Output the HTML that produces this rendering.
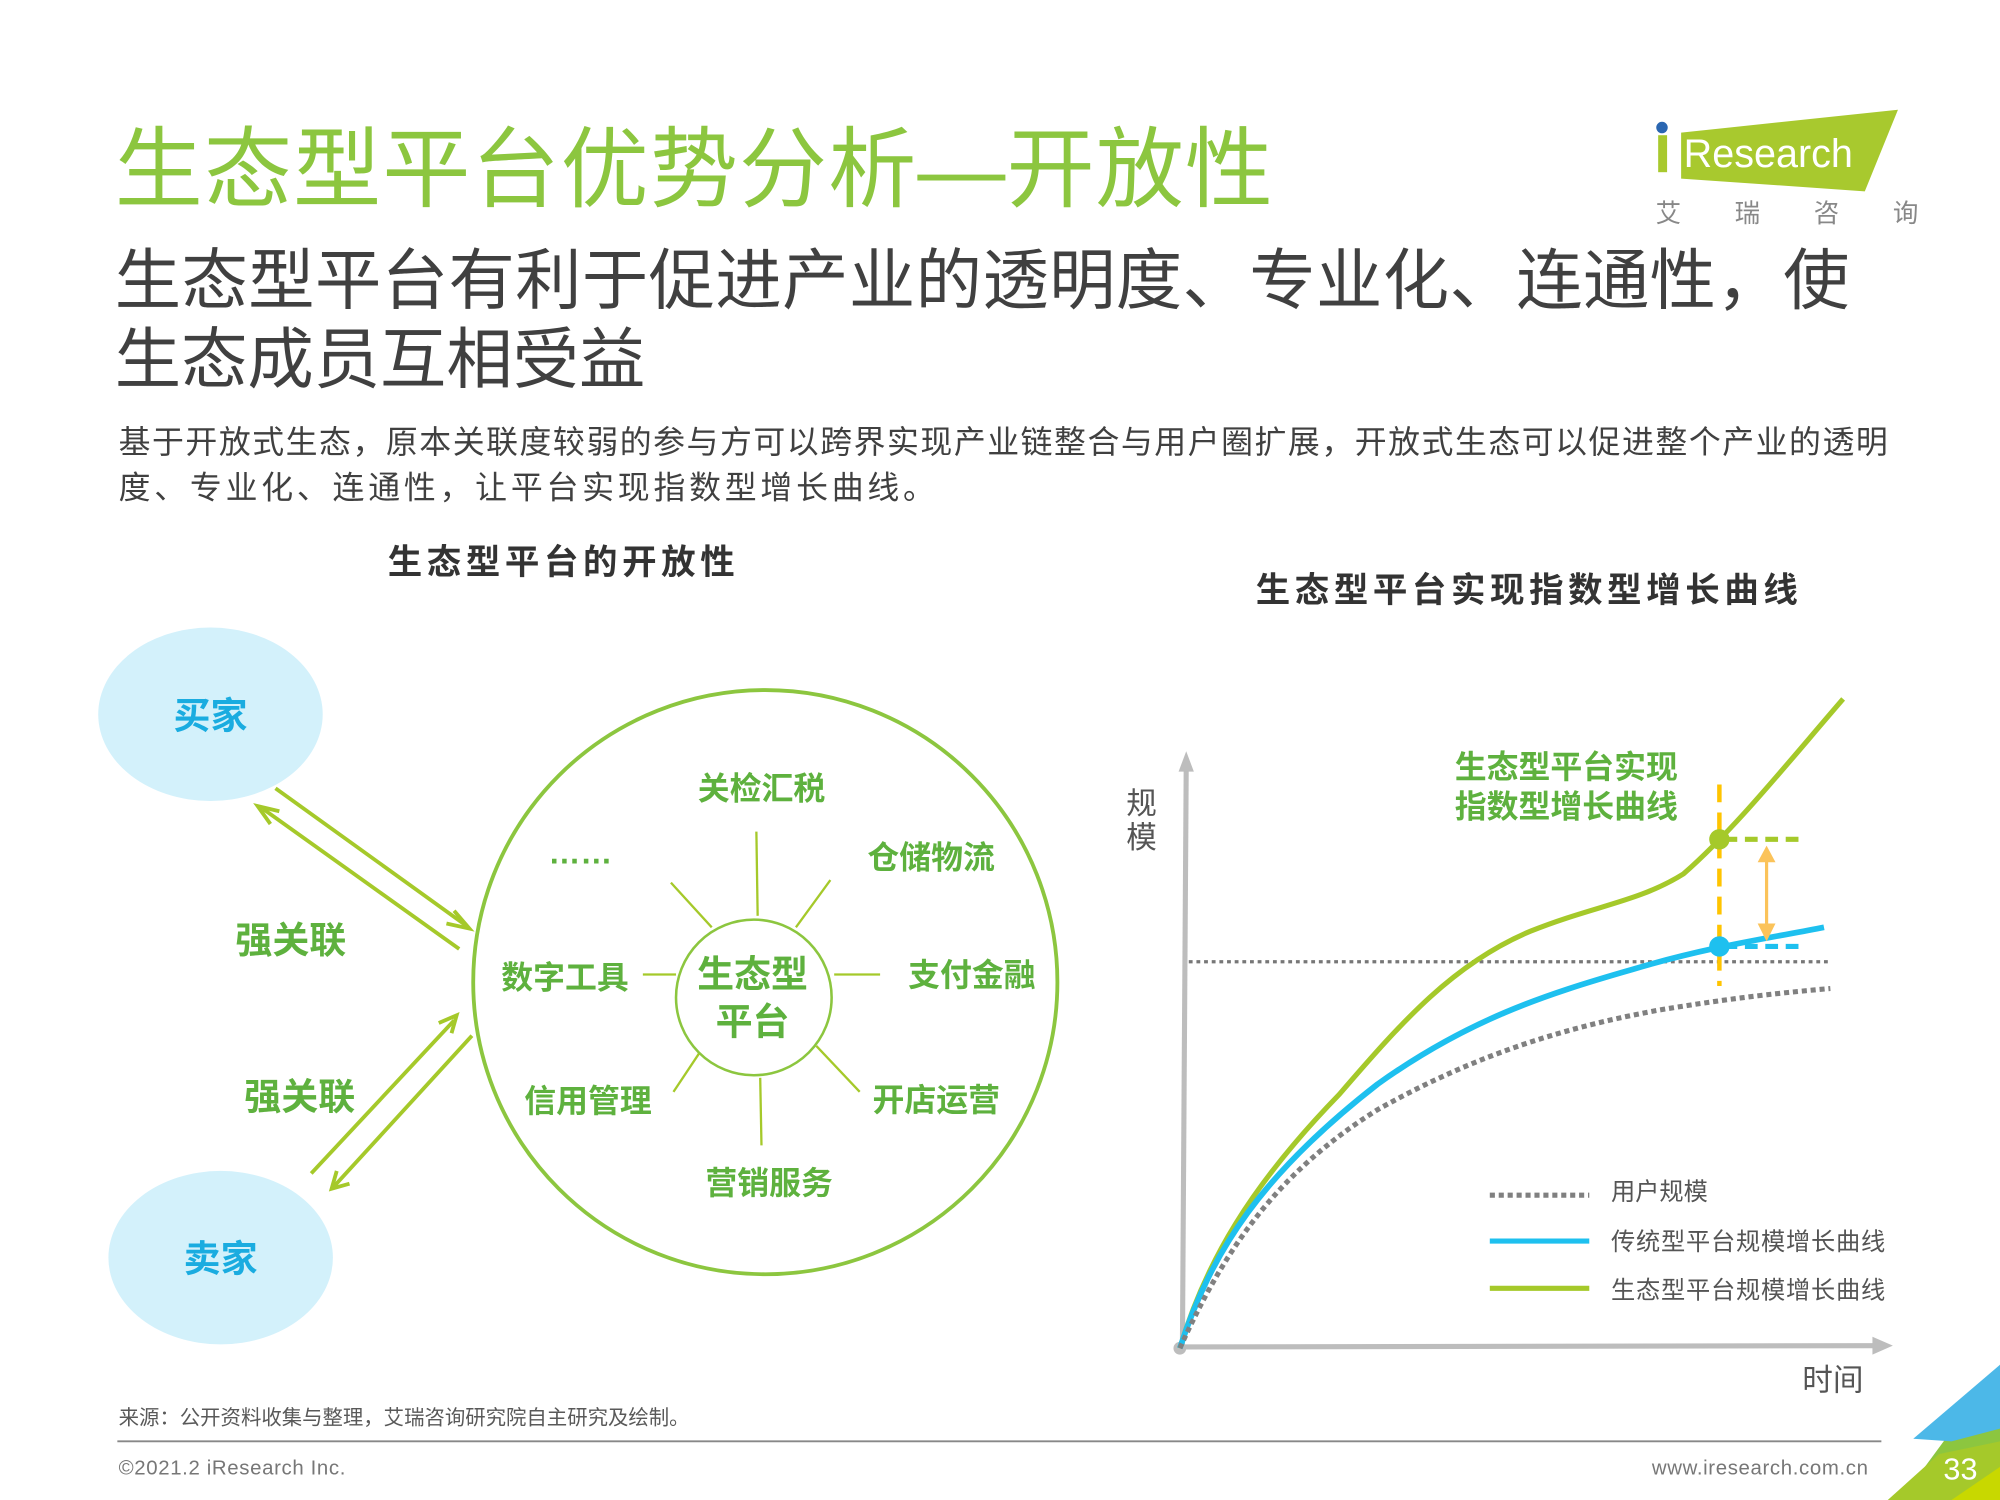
<!DOCTYPE html>
<html><head><meta charset="utf-8"><style>
html,body{margin:0;padding:0;background:#fff;}
svg{display:block;}
text{font-family:"Liberation Sans","Noto Sans CJK SC",sans-serif;}
</style></head><body>
<svg width="2000" height="1500" viewBox="0 0 1568 1176" xmlns="http://www.w3.org/2000/svg">
<rect width="1568" height="1176" fill="#fff"/>
<!-- logo -->
<polygon points="1318,104 1488,86 1462,150 1318,140" fill="#a8c92e"/>
<rect x="1300" y="106" width="7" height="29" fill="#a8c92e"/>
<circle cx="1303" cy="100" r="4.5" fill="#2a66b1"/>
<text x="1320" y="131" font-size="31" fill="#fff">Research</text>
<text x="1298" y="174" font-size="20" fill="#888" letter-spacing="42">艾瑞咨询</text>
<!-- titles -->
<text x="90" y="157" font-size="69" fill="#8cc63f" textLength="908">生态型平台优势分析—开放性</text>
<text x="90" y="238" font-size="52" fill="#404040" textLength="1360">生态型平台有利于促进产业的透明度、专业化、连通性，使</text>
<text x="90" y="300" font-size="52" fill="#404040">生态成员互相受益</text>
<text x="93" y="355" font-size="25" fill="#404040" textLength="1387">基于开放式生态，原本关联度较弱的参与方可以跨界实现产业链整合与用户圈扩展，开放式生态可以促进整个产业的透明</text>
<text x="93" y="391" font-size="25" fill="#404040" textLength="640">度、专业化、连通性，让平台实现指数型增长曲线。</text>
<text x="440" y="450" font-size="27" font-weight="bold" fill="#333" text-anchor="middle" textLength="272">生态型平台的开放性</text>
<text x="1197" y="472" font-size="27" font-weight="bold" fill="#333" text-anchor="middle" textLength="425">生态型平台实现指数型增长曲线</text>
<!-- left diagram -->
<ellipse cx="165" cy="560" rx="88" ry="68" fill="#d3f1fb"/>
<ellipse cx="173" cy="986" rx="88" ry="68" fill="#d3f1fb"/>
<text x="165" y="571" font-size="29" font-weight="bold" fill="#1aace0" text-anchor="middle">买家</text>
<text x="173" y="997" font-size="29" font-weight="bold" fill="#1aace0" text-anchor="middle">卖家</text>
<g stroke="#a5c92a" stroke-width="3" fill="none">
<line x1="216" y1="618" x2="366" y2="726"/><polyline points="356,714 368,728 350,724"/>
<line x1="360" y1="744" x2="206" y2="634"/><polyline points="212,646 202,632 219,636"/>
<line x1="244" y1="920" x2="356" y2="800"/><polyline points="344,802 358,796 354,810"/>
<line x1="370" y1="812" x2="262" y2="930"/><polyline points="274,928 260,932 264,918"/>
</g>
<text x="228" y="747" font-size="29" font-weight="bold" fill="#5eb13e" text-anchor="middle">强关联</text>
<text x="235" y="870" font-size="29" font-weight="bold" fill="#5eb13e" text-anchor="middle">强关联</text>
<circle cx="600" cy="770" r="229" fill="none" stroke="#8cc63f" stroke-width="3"/>
<circle cx="591" cy="782" r="61" fill="none" stroke="#8cc63f" stroke-width="2"/>
<g stroke="#a5c92a" stroke-width="1.8">
<line x1="593" y1="652" x2="594" y2="718"/>
<line x1="651" y1="690" x2="624" y2="727"/>
<line x1="654" y1="764" x2="690" y2="764"/>
<line x1="640" y1="820" x2="674" y2="856"/>
<line x1="596" y1="845" x2="597" y2="898"/>
<line x1="548" y1="826" x2="528" y2="856"/>
<line x1="504" y1="764" x2="530" y2="764"/>
<line x1="526" y1="692" x2="558" y2="727"/>
</g>
<g font-size="25" font-weight="bold" fill="#5eb13e" text-anchor="middle">
<text x="597" y="627">关检汇税</text>
<text x="730" y="681">仓储物流</text>
<text x="762" y="773">支付金融</text>
<text x="734" y="871">开店运营</text>
<text x="603" y="936">营销服务</text>
<text x="461" y="872">信用管理</text>
<text x="443" y="775">数字工具</text>
<text x="455" y="677">……</text>
<text x="590" y="774" font-size="29">生态型</text>
<text x="590" y="811" font-size="29">平台</text>
</g>
<!-- right chart -->
<g stroke="#bdbdbd" stroke-width="4" fill="none">
<line x1="927" y1="1058" x2="930" y2="600"/>
<line x1="925" y1="1056" x2="1470" y2="1055"/>
</g>
<polygon points="924,605 930,589 936,605" fill="#bdbdbd"/>
<polygon points="1468,1048 1484,1055 1468,1062" fill="#bdbdbd"/>
<circle cx="925" cy="1057" r="5" fill="#bdbdbd"/>
<line x1="932" y1="754" x2="1436" y2="754" stroke="#777" stroke-width="2.5" stroke-dasharray="3,3"/>
<path d="M925,1057 C945,990 980,930 1050,858 C1100,800 1140,755 1200,730 C1250,710 1285,707 1320,685 C1360,650 1400,600 1445,548" fill="none" stroke="#a5c92a" stroke-width="4"/>
<path d="M925,1057 C950,980 990,920 1080,850 C1150,800 1210,780 1280,760 C1340,742 1390,735 1430,727" fill="none" stroke="#1ec0ef" stroke-width="4.5"/>
<path d="M925,1057 C960,980 1000,920 1080,870 C1160,825 1230,805 1300,792 C1360,782 1400,778 1435,775" fill="none" stroke="#808080" stroke-width="4" stroke-dasharray="4,3"/>
<line x1="1348" y1="615" x2="1348" y2="773" stroke="#ffc400" stroke-width="3.5" stroke-dasharray="14,8"/>
<line x1="1352" y1="658" x2="1412" y2="658" stroke="#a5c92a" stroke-width="4" stroke-dasharray="10,6"/>
<line x1="1352" y1="742" x2="1412" y2="742" stroke="#1ec0ef" stroke-width="4" stroke-dasharray="10,6"/>
<line x1="1385" y1="672" x2="1385" y2="728" stroke="#fbc35a" stroke-width="2.5"/>
<polygon points="1378,676 1385,663 1392,676" fill="#fbc35a"/>
<polygon points="1378,724 1385,738 1392,724" fill="#fbc35a"/>
<circle cx="1348" cy="658" r="8" fill="#a5c92a"/>
<circle cx="1348" cy="742" r="8" fill="#1ec0ef"/>
<text x="1228" y="610" font-size="25" font-weight="bold" fill="#5eb13e" text-anchor="middle">生态型平台实现</text>
<text x="1228" y="641" font-size="25" font-weight="bold" fill="#5eb13e" text-anchor="middle">指数型增长曲线</text>
<text x="895" y="638" font-size="24" fill="#555" text-anchor="middle">规</text>
<text x="895" y="665" font-size="24" fill="#555" text-anchor="middle">模</text>
<text x="1437" y="1090" font-size="24" fill="#555" text-anchor="middle">时间</text>
<line x1="1168" y1="937" x2="1246" y2="937" stroke="#808080" stroke-width="4" stroke-dasharray="4,3"/>
<line x1="1168" y1="973" x2="1246" y2="973" stroke="#1ec0ef" stroke-width="4"/>
<line x1="1168" y1="1010" x2="1246" y2="1010" stroke="#a5c92a" stroke-width="4"/>
<g font-size="19" fill="#555">
<text x="1263" y="941">用户规模</text>
<text x="1263" y="980" textLength="215">传统型平台规模增长曲线</text>
<text x="1263" y="1018" textLength="215">生态型平台规模增长曲线</text>
</g>
<!-- footer -->
<text x="93" y="1117" font-size="16" fill="#595959">来源：公开资料收集与整理，艾瑞咨询研究院自主研究及绘制。</text>
<line x1="92" y1="1130" x2="1475" y2="1130" stroke="#888" stroke-width="1.5"/>
<text x="93" y="1156" font-size="16" fill="#777" letter-spacing="0.5">©2021.2 iResearch Inc.</text>
<text x="1465" y="1156" font-size="16" fill="#777" text-anchor="end" letter-spacing="0.5">www.iresearch.com.cn</text>
<polygon points="1568,1070 1568,1176 1490,1176" fill="#8cc63f"/>
<polygon points="1568,1070 1568,1120 1530,1130 1500,1128" fill="#4cb8e8"/>
<polygon points="1568,1130 1568,1176 1480,1176 1520,1140" fill="#a5c92a"/>
<polygon points="1530,1176 1568,1150 1568,1176" fill="#c8d800"/>
<text x="1537" y="1160" font-size="24" fill="#fff" text-anchor="middle">33</text>
</svg>
</body></html>
